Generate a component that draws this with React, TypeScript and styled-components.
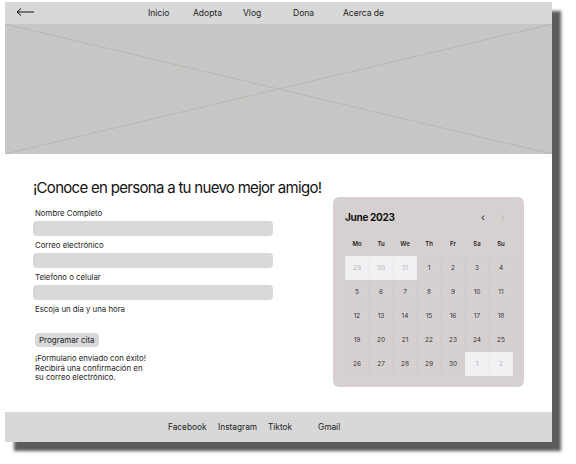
import React from 'react';
import styled, { createGlobalStyle } from 'styled-components';

const GlobalStyle = createGlobalStyle`
  html, body {
    margin: 0;
    padding: 0;
    background: #ffffff;
  }
  body {
    font-family: Inter, 'Noto Sans', sans-serif;
    color: #1c1c1c;
  }
`;

const Page = styled.div`
  padding: 2px 0 0 5px;
  width: 576px;
  height: 464px;
  box-sizing: border-box;
`;

const Frame = styled.div`
  width: 547px;
  background: #ffffff;
  box-shadow: 9px 9px 3px rgba(50, 50, 50, 0.8);
`;

const NavBar = styled.nav`
  height: 22px;
  background: #d8d8d8;
  display: flex;
  align-items: center;
  padding-left: 11px;
`;

const BackArrow = styled.svg`
  width: 18px;
  height: 10px;
  margin-right: 114px;
  margin-top: -3px;
`;

const NavLink = styled.span<{ $w: number }>`
  width: ${p => p.$w}px;
  font-size: 8.5px;
  color: #222;
`;

const Hero = styled.div`
  height: 130px;
  background: #c8c7c5;
  svg {
    display: block;
    width: 100%;
    height: 100%;
  }
`;

const Main = styled.main`
  height: 258px;
  display: flex;
  padding: 24px 0 0 28px;
  box-sizing: border-box;
`;

const FormCol = styled.div`
  width: 300px;
  display: flex;
  flex-direction: column;
`;

const Heading = styled.h1`
  margin: 0 0 10px;
  font-size: 15px;
  letter-spacing: -0.7px;
  line-height: 20px;
  font-weight: 400;
  white-space: nowrap;
  color: #111;
`;

const Label = styled.div`
  font-size: 7.8px;
  line-height: 10px;
  padding-left: 2px;
  margin-bottom: 3px;
  color: #222;
`;

const Input = styled.div`
  width: 240px;
  height: 15px;
  border-radius: 4px;
  background: #d9d9d9;
  margin-bottom: 4px;
`;

const Button = styled.button`
  align-self: flex-start;
  margin: 16px 0 0 2px;
  height: 14px;
  padding: 0 4px;
  border: none;
  border-radius: 4px;
  background: #d9d9d9;
  font-family: Inter, sans-serif;
  font-size: 8px;
  color: #222;
`;

const Success = styled.p`
  margin: 7px 0 0 2px;
  font-size: 7.8px;
  line-height: 9.5px;
  color: #222;
`;

const Calendar = styled.div`
  margin-top: 19px;
  width: 191px;
  height: 190px;
  box-sizing: border-box;
  background: #d6d1d0;
  border-radius: 6px;
  padding: 12px 11px 0 12px;
`;

const CalHeader = styled.div`
  display: flex;
  align-items: center;
  height: 16px;
`;

const Month = styled.div`
  flex: 1;
  font-size: 10px;
  letter-spacing: -0.3px;
  font-weight: 700;
  color: #111;
`;

const Chevron = styled.span<{ $faded?: boolean }>`
  width: 20px;
  text-align: center;
  font-size: 10px;
  color: ${p => (p.$faded ? '#b9b4b3' : '#222')};
`;

const Grid = styled.div`
  display: grid;
  grid-template-columns: repeat(7, 24px);
  width: 168px;
`;

const WeekDay = styled.div`
  height: 22px;
  margin-top: 7px;
  margin-bottom: 2px;
  display: flex;
  align-items: center;
  justify-content: center;
  font-size: 6px;
  font-weight: 600;
  color: #222;
`;

const Day = styled.div<{ $out?: boolean }>`
  height: 24px;
  display: flex;
  align-items: center;
  justify-content: center;
  font-size: 6.5px;
  box-sizing: border-box;
  border: 0.5px solid rgba(0, 0, 0, 0.012);
  background: ${p => (p.$out ? '#f1f1f4' : 'transparent')};
  color: ${p => (p.$out ? '#b8b8bd' : '#333')};
`;

const Footer = styled.footer`
  height: 30px;
  background: #d8d8d8;
  display: flex;
  align-items: center;
  padding-left: 163px;
`;

const FooterLink = styled.span`
  width: 50px;
  font-size: 8.3px;
  color: #222;
`;

const navItems: [string, number][] = [
  ['Inicio', 45],
  ['Adopta', 50],
  ['Vlog', 50],
  ['Dona', 50],
  ['Acerca de', 60],
];

const weekDays = ['Mo', 'Tu', 'We', 'Th', 'Fr', 'Sa', 'Su'];

const days: { n: number; out?: boolean }[] = [
  { n: 29, out: true },
  { n: 30, out: true },
  { n: 31, out: true },
  ...Array.from({ length: 30 }, (_, i) => ({ n: i + 1 })),
  { n: 1, out: true },
  { n: 2, out: true },
];

export default function App() {
  return (
    <Page>
      <GlobalStyle />
      <Frame>
        <NavBar>
          <BackArrow viewBox="0 0 18 10">
            <path d="M1 5h17M1 5l4-3.5M1 5l4 3.5" stroke="#111" strokeWidth="1" fill="none" />
          </BackArrow>
          {navItems.map(([t, w]) => (
            <NavLink key={t} $w={w}>
              {t}
            </NavLink>
          ))}
        </NavBar>
        <Hero>
          <svg viewBox="0 0 547 130" preserveAspectRatio="none">
            <line x1="0" y1="0" x2="547" y2="130" stroke="#b3b2b0" strokeWidth="0.8" />
            <line x1="547" y1="0" x2="0" y2="130" stroke="#b3b2b0" strokeWidth="0.8" />
          </svg>
        </Hero>
        <Main>
          <FormCol>
            <Heading>¡Conoce en persona a tu nuevo mejor amigo!</Heading>
            <Label>Nombre Completo</Label>
            <Input />
            <Label>Correo electrónico</Label>
            <Input />
            <Label>Telefono o celular</Label>
            <Input />
            <Label>Escoja un día y una hora</Label>
            <Button>Programar cita</Button>
            <Success>
              ¡Formulario enviado con éxito!
              <br />
              Recibirá una confirmación en
              <br />
              su correo electrónico.
            </Success>
          </FormCol>
          <Calendar>
            <CalHeader>
              <Month>June 2023</Month>
              <Chevron>‹</Chevron>
              <Chevron $faded>›</Chevron>
            </CalHeader>
            <Grid>
              {weekDays.map(d => (
                <WeekDay key={d}>{d}</WeekDay>
              ))}
              {days.map((d, i) => (
                <Day key={i} $out={d.out}>
                  {d.n}
                </Day>
              ))}
            </Grid>
          </Calendar>
        </Main>
        <Footer>
          <FooterLink>Facebook</FooterLink>
          <FooterLink>Instagram</FooterLink>
          <FooterLink>Tiktok</FooterLink>
          <FooterLink>Gmail</FooterLink>
        </Footer>
      </Frame>
    </Page>
  );
}
